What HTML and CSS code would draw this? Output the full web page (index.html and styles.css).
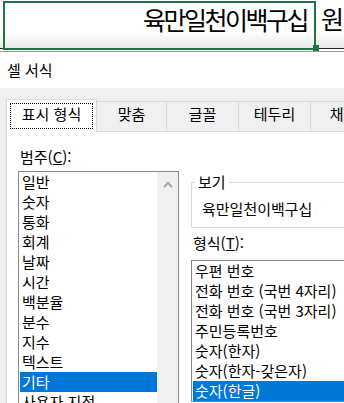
FILE: index.html
```html
<!DOCTYPE html>
<html lang="ko">
<head>
  <meta charset="UTF-8" />
  <meta name="viewport" content="width=device-width, initial-scale=1.0" />
  <title>셀 서식</title>
  <link rel="stylesheet" href="styles.css">
</head>
<body>
  <div class="sheet">
    <div class="grid-edge"></div>
    <div class="cell-active">육만일천이백구십<span class="fill-handle"></span></div>
    <div class="grid-edge grid-next">원</div>
  </div>

  <div class="dialog">
    <div class="dialog-title">셀 서식</div>
    <div class="dialog-body">
      <div class="tabs">
        <div class="tab active"><span class="focus">표시 형식</span></div>
        <div class="tab tab-70">맞춤</div>
        <div class="tab tab-72">글꼴</div>
        <div class="tab tab-72">테두리</div>
        <div class="tab tab-80">채우기</div>
      </div>

      <div class="panel">
        <div class="col-left">
          <label class="field-label">범주(<u>C</u>):</label>
          <div class="listbox">
            <ul class="items">
              <li>일반</li>
              <li>숫자</li>
              <li>통화</li>
              <li>회계</li>
              <li>날짜</li>
              <li>시간</li>
              <li>백분율</li>
              <li>분수</li>
              <li>지수</li>
              <li>텍스트</li>
              <li class="selected">기타</li>
              <li>사용자 지정</li>
            </ul>
            <div class="scrollbar">
              <svg width="10" height="7" viewBox="0 0 10 7">
                <polyline points="1,6 5,2 9,6" fill="none" stroke="#a6a6a6" stroke-width="2" />
              </svg>
            </div>
          </div>
        </div>

        <div class="col-right">
          <fieldset class="preview">
            <legend>보기</legend>
            <div class="preview-text">육만일천이백구십</div>
          </fieldset>
          <label class="field-label format-label">형식(<u>T</u>):</label>
          <div class="listbox format-box">
            <ul class="items">
              <li>우편 번호</li>
              <li>전화 번호 (국번 4자리)</li>
              <li>전화 번호 (국번 3자리)</li>
              <li>주민등록번호</li>
              <li>숫자(한자)</li>
              <li>숫자(한자-갖은자)</li>
              <li class="selected">숫자(한글)</li>
            </ul>
          </div>
        </div>
      </div>
    </div>
  </div>
</body>
</html>
```

FILE: styles.css
```css
* {
  box-sizing: border-box;
}
body {
  margin: 0;
  width: 344px;
  height: 403px;
  overflow: hidden;
  font-family: "Noto Sans CJK KR", "Noto Sans", sans-serif;
  font-size: 15px;
  color: #000;
  background: #f0f0f0;
}

/* excel cell strip */
.sheet {
  display: flex;
  align-items: flex-start;
  height: 52px;
  border-bottom: 1px solid #9a9a9a;
  background: linear-gradient(#fff 32px, #e8e8e8 48px, #fff 48px);
}
.grid-edge {
  width: 3px;
  height: 49px;
  border-bottom: 1px solid #262626;
}
.grid-next {
  flex: 1;
  padding: 3px 0 0 5px;
  font-size: 25px;
  line-height: 30px;
}
.cell-active {
  position: relative;
  width: 313px;
  height: 49px;
  margin-top: 1px;
  padding: 1px 7px 0 0;
  border: 2px solid #217346;
  text-align: right;
  font-size: 25px;
  line-height: 30px;
  letter-spacing: -2.5px;
  white-space: nowrap;
}
.fill-handle {
  position: absolute;
  right: -5px;
  bottom: -3px;
  width: 6px;
  height: 6px;
  background: #217346;
}

/* dialog */
.dialog-title {
  height: 36px;
  line-height: 36px;
  padding-left: 7px;
  background: #fff;
}
.dialog-body {
  padding: 11px 0 0 6px;
}
.tabs {
  display: flex;
  align-items: flex-end;
}
.tab {
  flex: none;
  height: 31px;
  padding-top: 2px;
  border: 1px solid #d9d9d9;
  border-left: none;
  text-align: center;
  line-height: 20px;
  white-space: nowrap;
}
.tab.active {
  width: 91px;
  height: 33px;
  padding: 3px;
  border-left: 1px solid #d9d9d9;
  border-bottom: none;
  background: #fff;
}
.focus {
  display: block;
  height: 26px;
  border: 1px dotted #000;
  line-height: 20px;
}
.tab-70 { width: 70px; }
.tab-72 { width: 72px; }
.tab-80 { width: 80px; }

.panel {
  display: flex;
  height: 280px;
  padding: 15px 0 0 11px;
  background: #fff;
  border-left: 1px solid #d9d9d9;
}
.col-left {
  flex: none;
  width: 161px;
}
.col-right {
  flex: none;
  width: 200px;
  margin-left: 12px;
}
.field-label {
  display: block;
  padding-left: 2px;
  line-height: 20px;
}
.listbox {
  display: flex;
  margin-top: 4px;
  border: 1px solid #828790;
  background: #fff;
}
.items {
  flex: 1;
  list-style: none;
  margin: 0;
  padding: 0 0 0 1px;
}
.items li {
  height: 20px;
  padding-left: 2px;
  line-height: 20px;
  white-space: nowrap;
}
.items li.selected {
  background: #0078d7;
  color: #fff;
}
.scrollbar {
  flex: none;
  display: flex;
  justify-content: center;
  align-items: flex-start;
  width: 21px;
  padding-top: 9px;
  background: #f0f0f0;
}

.preview {
  margin: 25px 0 0;
  min-width: 0;
  padding: 7px 0 8px 10px;
  border: 1px solid #dcdcdc;
}
.preview legend {
  margin-left: -7px;
  padding: 0 3px;
  line-height: 20px;
}
.preview-text {
  line-height: 20px;
}
.format-label {
  margin-top: 5px;
}
.format-box {
  margin-top: 7px;
}
```
